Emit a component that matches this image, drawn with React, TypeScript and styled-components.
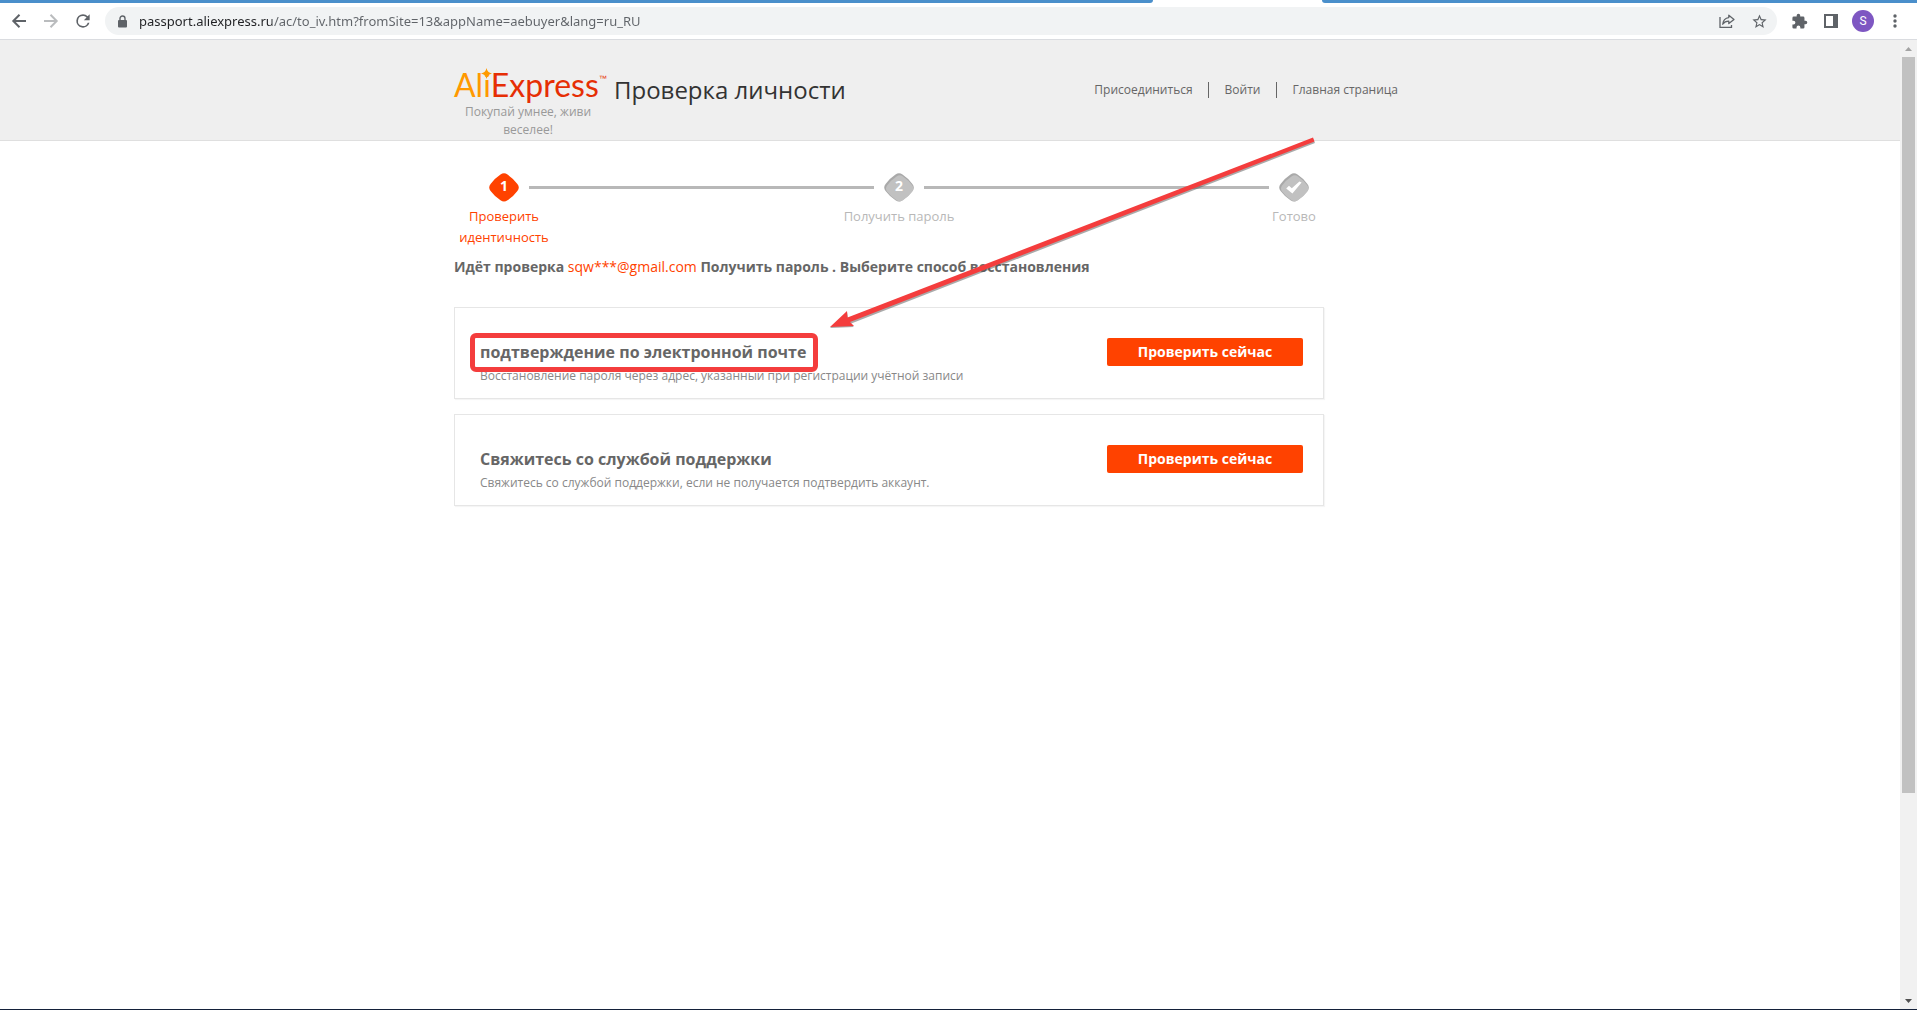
import React from "react";
import styled, { createGlobalStyle } from "styled-components";

const GlobalStyle = createGlobalStyle`
  *, *::before, *::after { box-sizing: border-box; }
  body {
    margin: 0;
    background: #fff;
    color: #666;
    font-family: "Open Sans", "Noto Sans", sans-serif;
    font-size: 12px;
  }
  a { color: inherit; text-decoration: none; }
  h1, h2, p, ol { margin: 0; padding: 0; }
`;

const Window = styled.div`
  display: flex;
  flex-direction: column;
  height: 100vh;
  border-bottom: 1px solid #14213a;
  overflow: hidden;
`;

const TabStrip = styled.div`
  display: flex;
  height: 3px;
`;

const InactiveTabs = styled.div<{ $grow: number; $side: "left" | "right" }>`
  flex: ${(p) => p.$grow} 1 0;
  background: #4a8fcb;
  border-radius: ${(p) => (p.$side === "left" ? "0 0 8px 0" : "0 0 0 8px")};
`;

const ActiveTab = styled.div`
  width: 169px;
`;

const Toolbar = styled.div`
  display: flex;
  align-items: center;
  height: 37px;
  padding: 0 6px 0 3px;
  border-bottom: 1px solid #dadce0;
`;

const ToolButton = styled.button<{ $faded?: boolean }>`
  display: flex;
  align-items: center;
  justify-content: center;
  width: 32px;
  height: 28px;
  padding: 0;
  border: 0;
  background: none;
  color: ${(p) => (p.$faded ? "#babcbe" : "#5f6368")};
`;

const AddressBar = styled.label`
  display: flex;
  flex: 1;
  align-items: center;
  height: 28px;
  margin: 0 6px 0 6px;
  padding: 0 2px 0 12px;
  border-radius: 14px;
  background: #f1f3f4;
`;

const AddressInput = styled.input`
  flex: 1;
  min-width: 0;
  height: 20px;
  margin-left: 11px;
  padding: 0;
  border: 0;
  outline: 0;
  background: linear-gradient(to right, #202124 133px, #5f6368 133px);
  background-clip: text;
  -webkit-background-clip: text;
  color: transparent;
  font: 13px/20px "Noto Sans", "Open Sans", sans-serif;
`;

const Avatar = styled.span`
  width: 22px;
  height: 22px;
  border-radius: 50%;
  background: #7e57c2;
  color: #fff;
  font: 12px/22px Roboto, sans-serif;
  text-align: center;
`;

const Viewport = styled.div`
  display: flex;
  flex: 1;
  min-height: 0;
`;

const Page = styled.div`
  position: relative;
  flex: 1;
  min-width: 0;
`;

const Header = styled.header`
  height: 101px;
  background: #efefef;
  border-bottom: 1px solid #dfdfdf;
`;

const Container = styled.div`
  width: 100%;
  max-width: 992px;
  margin: 0 auto;
`;

const HeaderRow = styled(Container)`
  display: flex;
  align-items: flex-start;
`;

const Brand = styled.div`
  width: 148px;
  padding-top: 27px;
`;

const Logo = styled.a`
  display: block;
  height: 36px;
  color: #e62e04;
  font: 32px/36px Lato, sans-serif;
  white-space: nowrap;
`;

const LogoAli = styled.span`
  position: relative;
  color: #ff9900;
`;

const LogoStar = styled.svg`
  position: absolute;
  top: 3px;
  right: -1px;
`;

const Trademark = styled.sup`
  font: 8px/8px "Liberation Sans", sans-serif;
  vertical-align: 16px;
`;

const Tagline = styled.p`
  color: #999;
  font-size: 12px;
  line-height: 18px;
  text-align: center;
`;

const PageTitle = styled.h1`
  margin: 33px 0 0 12px;
  color: #333;
  font-size: 24px;
  font-weight: 400;
  line-height: 34px;
`;

const Nav = styled.nav`
  display: flex;
  margin: 42px 48px 0 auto;
  font-size: 12px;
  line-height: 16px;
`;

const NavLink = styled.a`
  & + & {
    margin-left: 15px;
    padding-left: 16px;
    border-left: 1px solid #666;
  }
`;

const Steps = styled.ol`
  display: flex;
  max-width: 910px;
  height: 84px;
  margin: 32px 0 0 -10px;
  list-style: none;
`;

const Step = styled.li<{ $active?: boolean }>`
  display: flex;
  flex-direction: column;
  align-items: center;
  width: 120px;
  color: ${(p) => (p.$active ? "#ff4200" : "#b8b8b8")};
`;

const StepLabel = styled.span<{ $narrow?: boolean }>`
  width: ${(p) => (p.$narrow ? "100px" : "auto")};
  margin-top: 4px;
  font-size: 13px;
  line-height: 21px;
  text-align: center;
  white-space: ${(p) => (p.$narrow ? "normal" : "nowrap")};
`;

const StepLine = styled.li`
  flex: 1;
  height: 3px;
  margin: 13px -35px 0;
  background: #b8b8b8;
`;

const Prompt = styled.p`
  font-size: 14px;
  font-weight: 700;
  line-height: 20px;
`;

const Email = styled.span`
  color: #ff4200;
  font-weight: 400;
`;

const Methods = styled.div`
  display: flex;
  flex-direction: column;
  gap: 15px;
  max-width: 870px;
  margin-top: 30px;
`;

const Method = styled.section`
  display: flex;
  align-items: flex-start;
  justify-content: space-between;
  height: 92px;
  padding: 30px 20px 0 25px;
  border: 1px solid #e6e6e6;
  box-shadow: 1px 1px 1px #f5f5f5;
`;

const MethodTitle = styled.h2`
  font-size: 16px;
  font-weight: 700;
  line-height: 28px;
`;

const MethodText = styled.p`
  color: #888;
  font-size: 12px;
  line-height: 20px;
`;

const VerifyButton = styled.button`
  width: 196px;
  height: 28px;
  padding: 0;
  border: 0;
  border-radius: 2px;
  background: #ff4200;
  color: #fff;
  font: 700 14px/28px "Open Sans", "Noto Sans", sans-serif;
`;

const Marked = styled.span`
  position: relative;

  &::after {
    content: "";
    position: absolute;
    inset: -8px -12px -9px -10px;
    border: 5px solid #f43d3d;
    border-radius: 6px;
  }
`;

const Pointer = styled.svg`
  position: absolute;
  top: 96px;
  left: calc(50% - 122px);
  pointer-events: none;
`;

const Scrollbar = styled.div`
  display: flex;
  flex-direction: column;
  align-items: center;
  width: 17px;
  background: #f1f1f1;
`;

const ScrollButton = styled.button`
  display: flex;
  align-items: center;
  justify-content: center;
  width: 17px;
  height: 17px;
  padding: 0;
  border: 0;
  background: none;
`;

const ScrollTrack = styled.div`
  flex: 1;
  width: 13px;
`;

const ScrollThumb = styled.div`
  height: 78.7%;
  background: #c1c1c1;
`;

const DIAMOND =
  "M11.5 1.6 Q15 -1 18.5 1.6 Q24.5 5.6 28.4 11 Q31.2 14.5 28.4 18 Q24.5 23.4 18.5 27.2 Q15 29.6 11.5 27.2 Q5.5 23.4 1.6 18 Q-1.2 14.5 1.6 11 Q5.5 5.6 11.5 1.6Z";

function StepBadge({ mark, active }: { mark: string; active?: boolean }) {
  return (
    <svg width="30" height="29" viewBox="0 0 30 29">
      <path d={DIAMOND} fill={active ? "#ff4200" : "#a9a9a9"} />
      {!active && <path d={DIAMOND} fill="#c1c1c1" transform="translate(1.8 2) scale(.93)" />}
      {mark === "done" ? (
        <path d="M7.2 15.4 L10 12.8 L12.8 15.2 L20.4 8.4 L22.6 9.6 L13.4 20.6Z" fill="#fff" />
      ) : (
        <text
          x="15"
          y="18"
          fill="#fff"
          textAnchor="middle"
          fontFamily="Noto Sans, sans-serif"
          fontWeight="700"
          fontSize="14"
        >
          {mark}
        </text>
      )}
    </svg>
  );
}

const methods = [
  {
    title: "подтверждение по электронной почте",
    text: "Восстановление пароля через адрес, указанный при регистрации учётной записи",
    marked: true,
  },
  {
    title: "Свяжитесь со службой поддержки",
    text: "Свяжитесь со службой поддержки, если не получается подтвердить аккаунт.",
    marked: false,
  },
];

function BrowserToolbar() {
  return (
    <Toolbar>
      <ToolButton aria-label="Назад">
        <svg width="16" height="16" viewBox="0 0 16 16" fill="none" stroke="currentColor" strokeWidth="2">
          <path d="M15 8H2.5M8.5 1.8 2.3 8l6.2 6.2" />
        </svg>
      </ToolButton>
      <ToolButton aria-label="Вперёд" $faded>
        <svg width="16" height="16" viewBox="0 0 16 16" fill="none" stroke="currentColor" strokeWidth="2">
          <path d="M1 8h12.500M7.500 1.800 13.700 8l-6.200 6.200" />
        </svg>
      </ToolButton>
      <ToolButton aria-label="Обновить">
        <svg width="20" height="20" viewBox="0 0 24 24" fill="currentColor">
          <path d="M17.650 6.350A7.960 7.960 0 0 0 12 4a8 8 0 1 0 7.730 10h-2.080A6 6 0 1 1 12 6c1.660 0 3.140.690 4.220 1.780L13 11h7V4z" />
        </svg>
      </ToolButton>
      <AddressBar>
        <svg width="11" height="13" viewBox="0 0 11 13">
          <rect x="1" y="5" width="9" height="7.500" rx="1" fill="#5f6368" />
          <path d="M3 5.500V3.500a2.500 2.500 0 0 1 5 0v2" fill="none" stroke="#5f6368" strokeWidth="1.400" />
        </svg>
        <AddressInput
          aria-label="Адрес"
          defaultValue="passport.aliexpress.ru/ac/to_iv.htm?fromSite=13&appName=aebuyer&lang=ru_RU"
        />
        <ToolButton type="button" aria-label="Поделиться">
          <svg width="16" height="16" viewBox="0 0 16 16" fill="none" stroke="currentColor" strokeWidth="1.300">
            <path d="M1 4v10.300h11.500V12" />
            <path d="M9.800 2.200 15 6.400l-5.200 4.200V8.200C7 8.100 5.300 9 3.700 11.200 4.100 7.500 6.200 5 9.800 4.600z" strokeLinejoin="round" />
          </svg>
        </ToolButton>
        <ToolButton type="button" aria-label="Добавить в закладки">
          <svg width="17" height="17" viewBox="0 0 24 24" fill="currentColor">
            <path d="m22 9.240-7.190-.620L12 2 9.190 8.630 2 9.240l5.460 4.730L5.820 21 12 17.270 18.180 21l-1.630-7.030zM12 15.400l-3.760 2.270 1-4.280-3.320-2.880 4.380-.380L12 6.100l1.710 4.040 4.380.380-3.320 2.880 1 4.280z" />
          </svg>
        </ToolButton>
      </AddressBar>
      <ToolButton aria-label="Расширения">
        <svg width="17" height="17" viewBox="0 0 24 24" fill="currentColor">
          <path d="M20.500 11H19V7a2 2 0 0 0-2-2h-4V3.500a2.500 2.500 0 0 0-5 0V5H4a2 2 0 0 0-2 2v3.800h1.500a2.700 2.700 0 0 1 0 5.400H2V20a2 2 0 0 0 2 2h3.800v-1.500a2.700 2.700 0 0 1 5.400 0V22H17a2 2 0 0 0 2-2v-4h1.500a2.500 2.500 0 0 0 0-5z" />
        </svg>
      </ToolButton>
      <ToolButton aria-label="Боковая панель">
        <svg width="14" height="14" viewBox="0 0 14 14">
          <path d="M0 0h14v14H0zM2 2v10h7V2z" fill="currentColor" fillRule="evenodd" />
        </svg>
      </ToolButton>
      <ToolButton aria-label="Профиль">
        <Avatar>S</Avatar>
      </ToolButton>
      <ToolButton aria-label="Меню">
        <svg width="4" height="14" viewBox="0 0 4 14" fill="currentColor">
          <circle cx="2" cy="2" r="1.700" />
          <circle cx="2" cy="7" r="1.700" />
          <circle cx="2" cy="12" r="1.700" />
        </svg>
      </ToolButton>
    </Toolbar>
  );
}

export default function App() {
  return (
    <>
      <GlobalStyle />
      <Window>
        <TabStrip>
          <InactiveTabs $grow={1153} $side="left" />
          <ActiveTab />
          <InactiveTabs $grow={595} $side="right" />
        </TabStrip>
        <BrowserToolbar />
        <Viewport>
          <Page>
            <Header>
              <HeaderRow>
                <Brand>
                  <Logo href="#">
                    <LogoAli>
                      Ali
                      <LogoStar width="11" height="11" viewBox="0 0 11 11">
                        <path d="M5.500 0Q6.300 4.700 11 5.500 6.300 6.300 5.500 11 4.700 6.300 0 5.500 4.700 4.700 5.500 0Z" fill="#f90" />
                      </LogoStar>
                    </LogoAli>
                    Express<Trademark>™</Trademark>
                  </Logo>
                  <Tagline>Покупай умнее, живи веселее!</Tagline>
                </Brand>
                <PageTitle>Проверка личности</PageTitle>
                <Nav>
                  <NavLink href="#">Присоединиться</NavLink>
                  <NavLink href="#">Войти</NavLink>
                  <NavLink href="#">Главная страница</NavLink>
                </Nav>
              </HeaderRow>
            </Header>
            <Container as="main">
              <Steps>
                <Step $active>
                  <StepBadge mark="1" active />
                  <StepLabel $narrow>Проверить идентичность</StepLabel>
                </Step>
                <StepLine aria-hidden="true" />
                <Step>
                  <StepBadge mark="2" />
                  <StepLabel>Получить пароль</StepLabel>
                </Step>
                <StepLine aria-hidden="true" />
                <Step>
                  <StepBadge mark="done" />
                  <StepLabel>Готово</StepLabel>
                </Step>
              </Steps>
              <Prompt>
                Идёт проверка <Email>sqw***@gmail.com</Email> Получить пароль . Выберите способ восстановления
              </Prompt>
              <Methods>
                {methods.map((m) => (
                  <Method key={m.title}>
                    <div>
                      <MethodTitle>{m.marked ? <Marked>{m.title}</Marked> : m.title}</MethodTitle>
                      <MethodText>{m.text}</MethodText>
                    </div>
                    <VerifyButton>Проверить сейчас</VerifyButton>
                  </Method>
                ))}
              </Methods>
            </Container>
            <Pointer width="490" height="196" viewBox="0 0 490 196">
              <g transform="translate(0 1)" fill="#555" opacity=".5">
                <path d="M2 191 19 175 20 181 485 2 487 6 22 187 26 190Z" />
              </g>
              <path d="M2 191 19 175 19.500 181.500 485 1.500 486.500 5.500 22 186 26 190Z" fill="#f43d3d" />
            </Pointer>
          </Page>
          <Scrollbar>
            <ScrollButton aria-label="Прокрутить вверх">
              <svg width="7" height="4" viewBox="0 0 7 4">
                <path d="M0 4 3.500 0 7 4Z" fill="#a3a3a3" />
              </svg>
            </ScrollButton>
            <ScrollTrack>
              <ScrollThumb />
            </ScrollTrack>
            <ScrollButton aria-label="Прокрутить вниз">
              <svg width="7" height="4" viewBox="0 0 7 4">
                <path d="M0 0h7L3.500 4Z" fill="#505050" />
              </svg>
            </ScrollButton>
          </Scrollbar>
        </Viewport>
      </Window>
    </>
  );
}
